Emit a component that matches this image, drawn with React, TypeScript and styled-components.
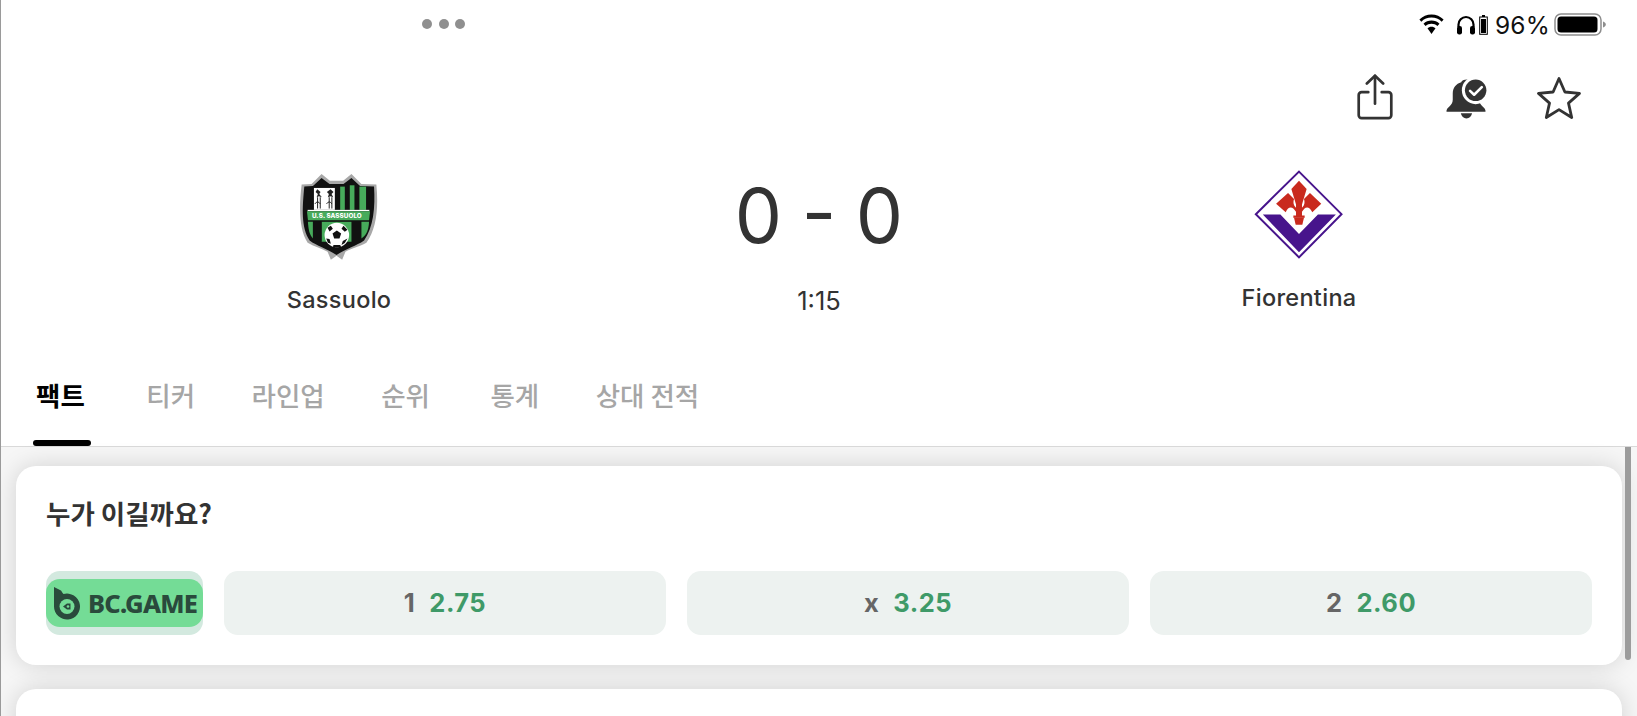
import React from "react";
import styled, { createGlobalStyle } from "styled-components";

const Global = createGlobalStyle`
  html, body { margin: 0; padding: 0; background: #fff; }
  body { font-family: Inter, "Noto Sans CJK KR", sans-serif; }
  * { box-sizing: border-box; }
`;

const Page = styled.div`
  position: relative;
  width: 1637px;
  height: 716px;
  overflow: hidden;
  display: flex;
  flex-direction: column;
  background: #fff;
  border-left: 1px solid #9a9a9a;
`;

const Header = styled.header`
  flex: none;
  height: 447px;
  display: flex;
  flex-direction: column;
  border-bottom: 1px solid #d9d9d9;
`;

const StatusBar = styled.div`
  flex: none;
  height: 48px;
  display: flex;
  align-items: center;
  justify-content: space-between;
  padding: 0 31px 0 421px;
`;

const Dots = styled.div`
  display: flex;
  gap: 6.5px;
`;

const Dot = styled.span`
  width: 10px;
  height: 10px;
  border-radius: 50%;
  background: #8f8f8f;
`;

const StatusIcons = styled.div`
  display: flex;
  align-items: center;
  height: 24px;
  margin-top: 1px;
`;

const Percent = styled.span`
  font: 400 24.5px/24px Inter, sans-serif;
  color: #111;
  margin: 0 4px 0 7px;
  letter-spacing: 0.2px;
`;

const Actions = styled.div`
  flex: none;
  height: 122px;
  display: flex;
  align-items: flex-start;
  justify-content: flex-end;
  padding: 26px 56px 0 0;
`;

const ActionSlot = styled.div<{ $gap: number }>`
  margin-right: ${(p) => p.$gap}px;
  display: flex;
`;

const Teams = styled.section`
  flex: none;
  height: 200px;
  display: grid;
  grid-template-columns: repeat(3, 480px);
  padding-left: 98px;
`;

const Team = styled.div`
  display: flex;
  flex-direction: column;
  align-items: center;
`;

const TeamName = styled.div`
  margin-top: 26px;
  font: 500 23.5px/26px Inter, sans-serif;
  letter-spacing: 0.3px;
  color: #333;
`;

const ScoreBox = styled.div`
  display: flex;
  flex-direction: column;
  align-items: center;
`;

const Score = styled.div`
  font: 400 75px/90px Inter, sans-serif;
  color: #333;
  margin-top: 1px;
  word-spacing: -1.5px;
  white-space: pre;
`;

const Clock = styled.div`
  margin-top: 27px;
  font: 400 25.5px/26px Inter, sans-serif;
  color: #333;
`;

const Tabs = styled.nav`
  flex: 1;
  display: flex;
  align-items: stretch;
  gap: 56.5px;
  padding: 0 0 0 35px;
`;

const Tab = styled.div<{ $active?: boolean; $extra?: number }>`
  position: relative;
  display: flex;
  align-items: center;
  height: 100%;
  margin-left: ${(p) => p.$extra ?? 0}px;
  padding-bottom: 26px;
  font: ${(p) => (p.$active ? 700 : 500)} 26.5px/32px "Noto Sans CJK KR", sans-serif;
  color: ${(p) => (p.$active ? "#000" : "#a6a6a6")};
  white-space: nowrap;

  ${(p) =>
    p.$active &&
    `&::after {
      content: "";
      position: absolute;
      left: -3px;
      right: -6px;
      bottom: 0;
      height: 6px;
      border-radius: 3px;
      background: #000;
    }`}
`;

const Content = styled.main`
  flex: 1;
  min-height: 0;
  display: flex;
  flex-direction: column;
  gap: 24px;
  padding: 19px 15px 0 15px;
  background: #f6f6f6;
`;

const Card = styled.section`
  flex: none;
  background: #fff;
  border-radius: 20px;
  box-shadow: 0 0 24px rgba(0, 0, 0, 0.15);
`;

const OddsCard = styled(Card)`
  height: 199px;
  padding: 30px 30px 0 30px;
`;

const EmptyCard = styled(Card)`
  height: 120px;
`;

const CardTitle = styled.h2`
  margin: 0;
  font: 700 26.5px/34px "Noto Sans CJK KR", sans-serif;
  color: #333;
`;

const OddsRow = styled.div`
  margin-top: 41px;
  display: grid;
  grid-template-columns: 157px repeat(3, 442px);
  column-gap: 21px;
  height: 64px;
`;

const Bookmaker = styled.div`
  border-radius: 14px;
  background: #d3e9df;
  display: flex;
  align-items: center;
  overflow: hidden;
`;

const BookmakerBar = styled.div`
  width: 100%;
  height: 48px;
  border-radius: 14px;
  background: #74dc96;
  display: flex;
  align-items: center;
  gap: 8px;
  padding-left: 7px;
`;

const BookmakerName = styled.span`
  font: 800 25.5px/48px "Noto Sans", Inter, sans-serif;
  color: #2a4a3c;
  letter-spacing: -0.8px;
`;

const OddButton = styled.div`
  border-radius: 14px;
  background: #edf2f0;
  display: flex;
  align-items: center;
  justify-content: center;
  gap: 14px;
  font: 700 25.5px/30px Inter, sans-serif;
  letter-spacing: 0.5px;
`;

const OddLabel = styled.span`
  color: #666;
`;

const OddValue = styled.span`
  color: #3f9a68;
`;

const Scrollbar = styled.div`
  position: absolute;
  right: 6px;
  top: 447px;
  width: 6px;
  height: 213px;
  border-radius: 0 0 3px 3px;
  background: #9c9c9c;
`;

const Wifi = () => (
  <svg width="29" height="21" viewBox="0 0 28 21">
    <path d="M14 3.6c3.9 0 7.5 1.5 10.2 4.1l1.9-2.2C22.9 2.4 18.6.5 14 .5S5.1 2.4 1.9 5.5l1.9 2.2C6.500 5.100 10.100 3.600 14 3.600z" fill="#000" />
    <path d="M14 9.700c2.200 0 4.300.9 5.900 2.300l2.100-2.300C19.900 7.700 17.100 6.500 14 6.500s-5.900 1.200-8 3.200l2.100 2.300c1.600-1.400 3.700-2.300 5.900-2.300z" fill="#000" />
    <path d="M14 12.800c-1.600 0-3 .6-4 1.500l4 5.700 4-5.700c-1-.9-2.400-1.500-4-1.500z" fill="#000" />
  </svg>
);

const Headphones = () => (
  <svg width="20" height="20" viewBox="0 0 20 20" style={{ marginLeft: 10 }}>
    <path d="M2.500 12V9.500a7.500 7.500 0 0 1 15 0V12" fill="none" stroke="#000" strokeWidth="2.200" />
    <rect x="1" y="11" width="5" height="8.500" rx="2.200" fill="#000" />
    <rect x="14" y="11" width="5" height="8.500" rx="2.200" fill="#000" />
  </svg>
);

const MiniBattery = () => (
  <svg width="9" height="20" viewBox="0 0 9 20" style={{ marginLeft: 3 }}>
    <rect x="3" y="0" width="3" height="2" fill="#000" />
    <rect x="0.700" y="2" width="7.600" height="17.300" fill="none" stroke="#000" strokeWidth="1" />
    <rect x="2" y="4" width="5" height="14" fill="#000" />
  </svg>
);

const Battery = () => (
  <svg width="52" height="23" viewBox="0 0 52 23">
    <rect x="1" y="1" width="46" height="21" rx="6" fill="none" stroke="#8d8d8d" strokeWidth="1.500" />
    <rect x="3.500" y="3.500" width="40" height="16" rx="3.500" fill="#000" />
    <path d="M49 8.500c1.700.5 2.800 1.700 2.800 3s-1.100 2.500-2.800 3z" fill="#8d8d8d" />
  </svg>
);

const ShareIcon = () => (
  <svg width="38" height="46" viewBox="0 0 38 48" fill="none" stroke="#333" strokeWidth="2.800" strokeLinecap="round" strokeLinejoin="round">
    <path d="M12 19H5a3 3 0 0 0-3 3v21a3 3 0 0 0 3 3h28a3 3 0 0 0 3-3V22a3 3 0 0 0-3-3h-7" />
    <path d="M19 31V2" />
    <path d="M10.500 10 19 1.800 27.500 10" />
  </svg>
);

const BellIcon = () => (
  <svg width="45" height="43" viewBox="0 0 44 42" style={{ marginTop: 2 }}>
    <path d="M21 3.500c1.800 0 3 1.200 3.200 2.700 5 1.300 8.300 5.500 8.300 11v6c0 2.600 1.300 4.800 3.300 6.500 2 1.700 2.800 3 2.800 4.300v1H0.500v-1c0-1.300.8-2.600 2.800-4.300 2-1.700 3.300-3.900 3.300-6.500v-6c0-5.500 3.300-9.700 8.300-11 .3-1.500 2.300-2.700 6.100-2.700z" fill="#333" />
    <path d="M14.500 36.500h11c-.5 3-2.800 5-5.500 5s-5-2-5.500-5z" fill="#333" />
    <circle cx="29" cy="14" r="13.500" fill="#fff" />
    <circle cx="29" cy="14" r="10.500" fill="#333" />
    <path d="M23.500 14.500l4 3.800 7.500-7.500" fill="none" stroke="#fff" strokeWidth="2.500" strokeLinecap="round" strokeLinejoin="round" />
  </svg>
);

const StarIcon = () => (
  <svg width="44" height="44" viewBox="0 0 44 44" fill="none" stroke="#333" strokeWidth="2.800" strokeLinejoin="round" style={{ marginTop: 2 }}>
    <path d="M22 2.500l5.900 13.500 14.600 1.400-11 9.700 3.200 14.400L22 33.600 9.300 41.500l3.200-14.400-11-9.700 14.600-1.400z" />
  </svg>
);

const SassuoloLogo = () => (
  <svg width="80" height="88" viewBox="95 35 235 265" style={{ marginTop: 3 }}>
    <path d="M100 70 L130 68 L160 38 L185 58 L225 58 L250 38 L280 68 L325 70 C332 140 325 205 295 245 C272 258 250 262 232 272 L222 296 L205 284 L188 296 L178 272 C160 262 140 258 118 245 C92 205 92 140 100 70 Z" fill="#a8a8a8" />
    <path d="M108 76 L134 74 L160 50 L184 68 L226 68 L250 50 L276 74 L318 76 C322 140 316 200 288 238 C265 254 235 262 205 282 C175 262 145 254 124 238 C98 200 102 140 108 76 Z" fill="#111" />
    <rect x="137" y="80" width="63" height="66" fill="#fff" />
    <path d="M147 84 l10 8 -4 6 8 10 -9 -3 -7 3 4 -10 -7 -6z" fill="#222" />
    <path d="M187 84 l9 8 -6 6 5 10 -8 -3 -8 3 3 -10 -6 -6z" fill="#222" />
    <path d="M148 108 v34 M156 108 v34 M183 108 v34 M191 108 v34 M140 128 q8 -12 16 0 M175 128 q8 -12 16 0" stroke="#222" strokeWidth="3" fill="none" />
    <rect x="216" y="76" width="14" height="70" fill="#47ab5b" />
    <rect x="245" y="72" width="14" height="74" fill="#47ab5b" />
    <rect x="274" y="76" width="20" height="70" fill="#47ab5b" />
    <rect x="118" y="146" width="186" height="4" fill="#fff" />
    <path d="M116 150 H306 L303 177 H119 Z" fill="#47ab5b" />
    <text x="206" y="170" textAnchor="middle" fontFamily="Inter, sans-serif" fontWeight="800" fontSize="19" fill="#fff" textLength="150">U.S. SASSUOLO</text>
    <path d="M119 182 H134 V232 C124 222 120 205 119 182 Z" fill="#47ab5b" />
    <rect x="160" y="182" width="90" height="60" fill="#47ab5b" />
    <path d="M280 182 H303 C302 205 296 222 280 232 Z" fill="#47ab5b" />
    <rect x="134" y="182" width="26" height="60" fill="#111" />
    <circle cx="206" cy="222" r="37" fill="#fff" />
    <path d="M206 208 l13 9 -5 15 h-16 l-5 -15z M178 200 l10 -6 6 9 -10 8z M226 194 l12 12 -8 6 -10 -9z M174 232 l10 2 4 14 -9 -3z M238 232 l-8 14 -10 6 4 -12z M196 252 h20 l3 5 -13 3 -12 -3z" fill="#111" />
  </svg>
);

const FiorentinaLogo = () => (
  <svg width="90" height="89" viewBox="70 28 270 268">
    <path d="M205 33 L333 161 L205 291 L75 161 Z" fill="#fff" stroke="#47148c" strokeWidth="6" strokeLinejoin="miter" />
    <path d="M96 162 H149 L205 221 L262 162 H316 L205 276 Z" fill="#47148c" />
    <g fill="#c92a1e">
      <path d="M205 60 L228 85 L213 135 H197 L182 85 Z" />
      <path d="M136 130 L172 97 L190 115 C186 128 190 136 197 142 V155 C188 140 175 132 165 155 Z" />
      <path d="M272 130 L238 97 L220 115 C224 128 220 136 213 142 V155 C222 140 233 132 245 155 Z" />
      <rect x="196" y="130" width="18" height="40" />
      <rect x="188" y="165" width="34" height="7" />
      <path d="M190 172 H220 L215 193 H195 Z" />
    </g>
  </svg>
);

const BcMark = () => (
  <svg width="27" height="33" viewBox="0 0 27 33" style={{ flex: "none" }}>
    <path d="M1 0 L8 3.500 C9 5 9.500 6 10.500 7 A13 13 0 1 1 1 19.500 Z" fill="#2a4a3c" />
    <circle cx="14" cy="19.500" r="7.500" fill="#74dc96" />
    <path d="M10 19.500 L14 16.500 H17.500 V22.500 H14 Z" fill="#2a4a3c" />
    <circle cx="15" cy="19.500" r="1.300" fill="#74dc96" />
  </svg>
);

const tabs: [string, number][] = [
  ["티커", 5],
  ["라인업", 0],
  ["순위", 0],
  ["통계", 4],
  ["상대 전적", 0],
];
const odds = [
  ["1", "2.75"],
  ["x", "3.25"],
  ["2", "2.60"],
];

export default function App() {
  return (
    <Page>
      <Global />
      <Header>
        <StatusBar>
          <Dots>
            <Dot />
            <Dot />
            <Dot />
          </Dots>
          <StatusIcons>
            <Wifi />
            <Headphones />
            <MiniBattery />
            <Percent>96%</Percent>
            <Battery />
          </StatusIcons>
        </StatusBar>
        <Actions>
          <ActionSlot $gap={52}>
            <ShareIcon />
          </ActionSlot>
          <ActionSlot $gap={46}>
            <BellIcon />
          </ActionSlot>
          <ActionSlot $gap={0}>
            <StarIcon />
          </ActionSlot>
        </Actions>
        <Teams>
          <Team>
            <SassuoloLogo />
            <TeamName>Sassuolo</TeamName>
          </Team>
          <ScoreBox>
            <Score>0 - 0</Score>
            <Clock>1:15</Clock>
          </ScoreBox>
          <Team>
            <FiorentinaLogo />
            <TeamName>Fiorentina</TeamName>
          </Team>
        </Teams>
        <Tabs>
          <Tab $active>팩트</Tab>
          {tabs.map(([t, extra]) => (
            <Tab key={t} $extra={extra}>
              {t}
            </Tab>
          ))}
        </Tabs>
      </Header>
      <Content>
        <OddsCard>
          <CardTitle>누가 이길까요?</CardTitle>
          <OddsRow>
            <Bookmaker>
              <BookmakerBar>
                <BcMark />
                <BookmakerName>BC.GAME</BookmakerName>
              </BookmakerBar>
            </Bookmaker>
            {odds.map(([label, value]) => (
              <OddButton key={label}>
                <OddLabel>{label}</OddLabel>
                <OddValue>{value}</OddValue>
              </OddButton>
            ))}
          </OddsRow>
        </OddsCard>
        <EmptyCard />
      </Content>
      <Scrollbar />
    </Page>
  );
}
